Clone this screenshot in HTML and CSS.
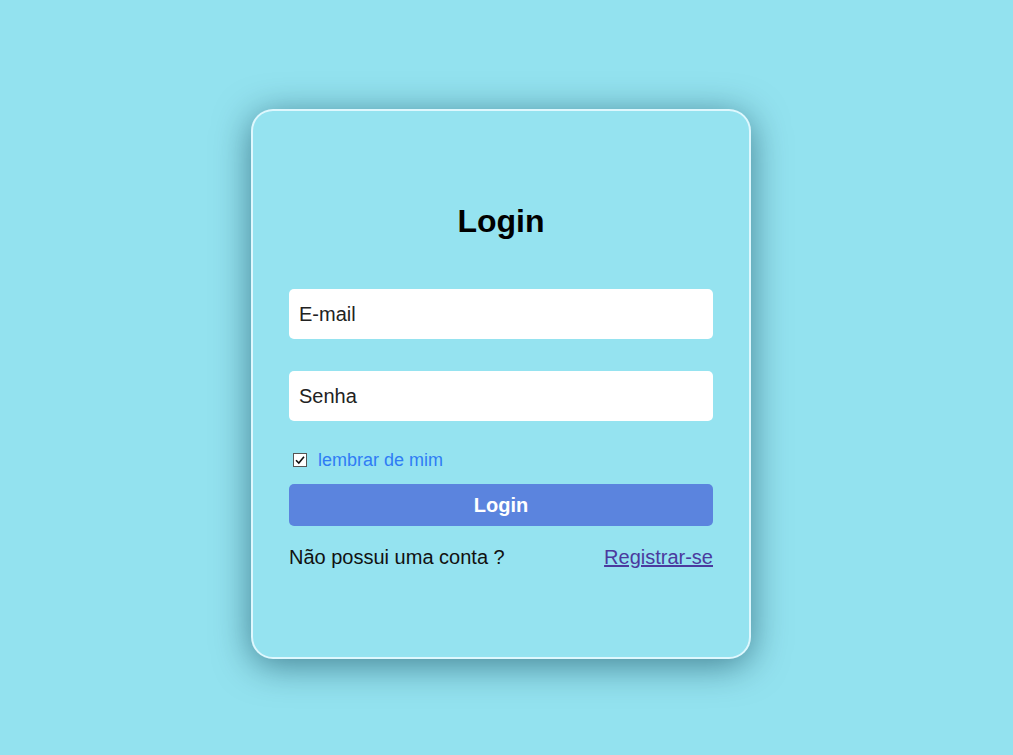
FILE: index.html
```html
<!DOCTYPE html>
<html lang="pt-BR">
<head>
<meta charset="utf-8">
<title>Login</title>
<link rel="stylesheet" href="styles.css">
</head>
<body>
<main class="page">
  <form class="card">
    <h1 class="title">Login</h1>
    <div class="field first"><span class="field-text">E-mail</span></div>
    <div class="field second"><span class="field-text">Senha</span></div>
    <label class="remember">
      <span class="check">
        <svg width="14" height="14" viewBox="0 0 14 14">
          <rect x="0.5" y="0.5" width="13" height="13" fill="#fff" stroke="#555" stroke-width="1"/>
          <path d="M3 7.2 L5.8 10 L11 3.8" fill="none" stroke="#111" stroke-width="1.6"/>
        </svg>
      </span>
      <span class="remember-text">lembrar de mim</span>
    </label>
    <button type="button" class="btn">Login</button>
    <div class="bottom">
      <span>Não possui uma conta ?</span>
      <a href="#" class="link">Registrar-se</a>
    </div>
  </form>
</main>
</body>
</html>
```
FILE: styles.css
```css
* { box-sizing: border-box; }
html, body {
  margin: 0;
  height: 100%;
  background: #93e2ef;
  font-family: "Liberation Sans", Arial, sans-serif;
}
.page {
  padding: 109px 0 0 251px;
}
.card {
  width: 500px;
  height: 550px;
  background: #95e3f0;
  border: 2px solid rgba(230, 250, 255, 0.9);
  border-radius: 22px;
  box-shadow: 0 6px 36px rgba(0, 50, 70, 0.55);
  padding: 0 36px;
  display: flex;
  flex-direction: column;
}
.title {
  margin: 92px 0 0;
  font-size: 32px;
  line-height: 37px;
  font-weight: bold;
  text-align: center;
  color: #000;
}
.field {
  height: 50px;
  background: #fff;
  border-radius: 5px;
  display: flex;
  align-items: center;
  padding-left: 10px;
  font-size: 20px;
  color: #222;
}
.field.first { margin-top: 49px; }
.field.second { margin-top: 32px; }
.remember {
  margin-top: 28px;
  height: 22px;
  display: flex;
  align-items: center;
  padding-left: 4px;
  gap: 11px;
}
.check { display: flex; }
.remember-text {
  font-size: 18px;
  color: #2f7cf5;
}
.btn {
  margin-top: 13px;
  height: 42px;
  border: none;
  border-radius: 5px;
  background: #5b84de;
  color: #fff;
  font-family: inherit;
  font-size: 20px;
  font-weight: bold;
}
.bottom {
  margin-top: 20px;
  display: flex;
  justify-content: space-between;
  font-size: 20px;
  line-height: 23px;
  color: #111;
}
.link {
  color: #4b3a9e;
  text-decoration: underline;
}
```
